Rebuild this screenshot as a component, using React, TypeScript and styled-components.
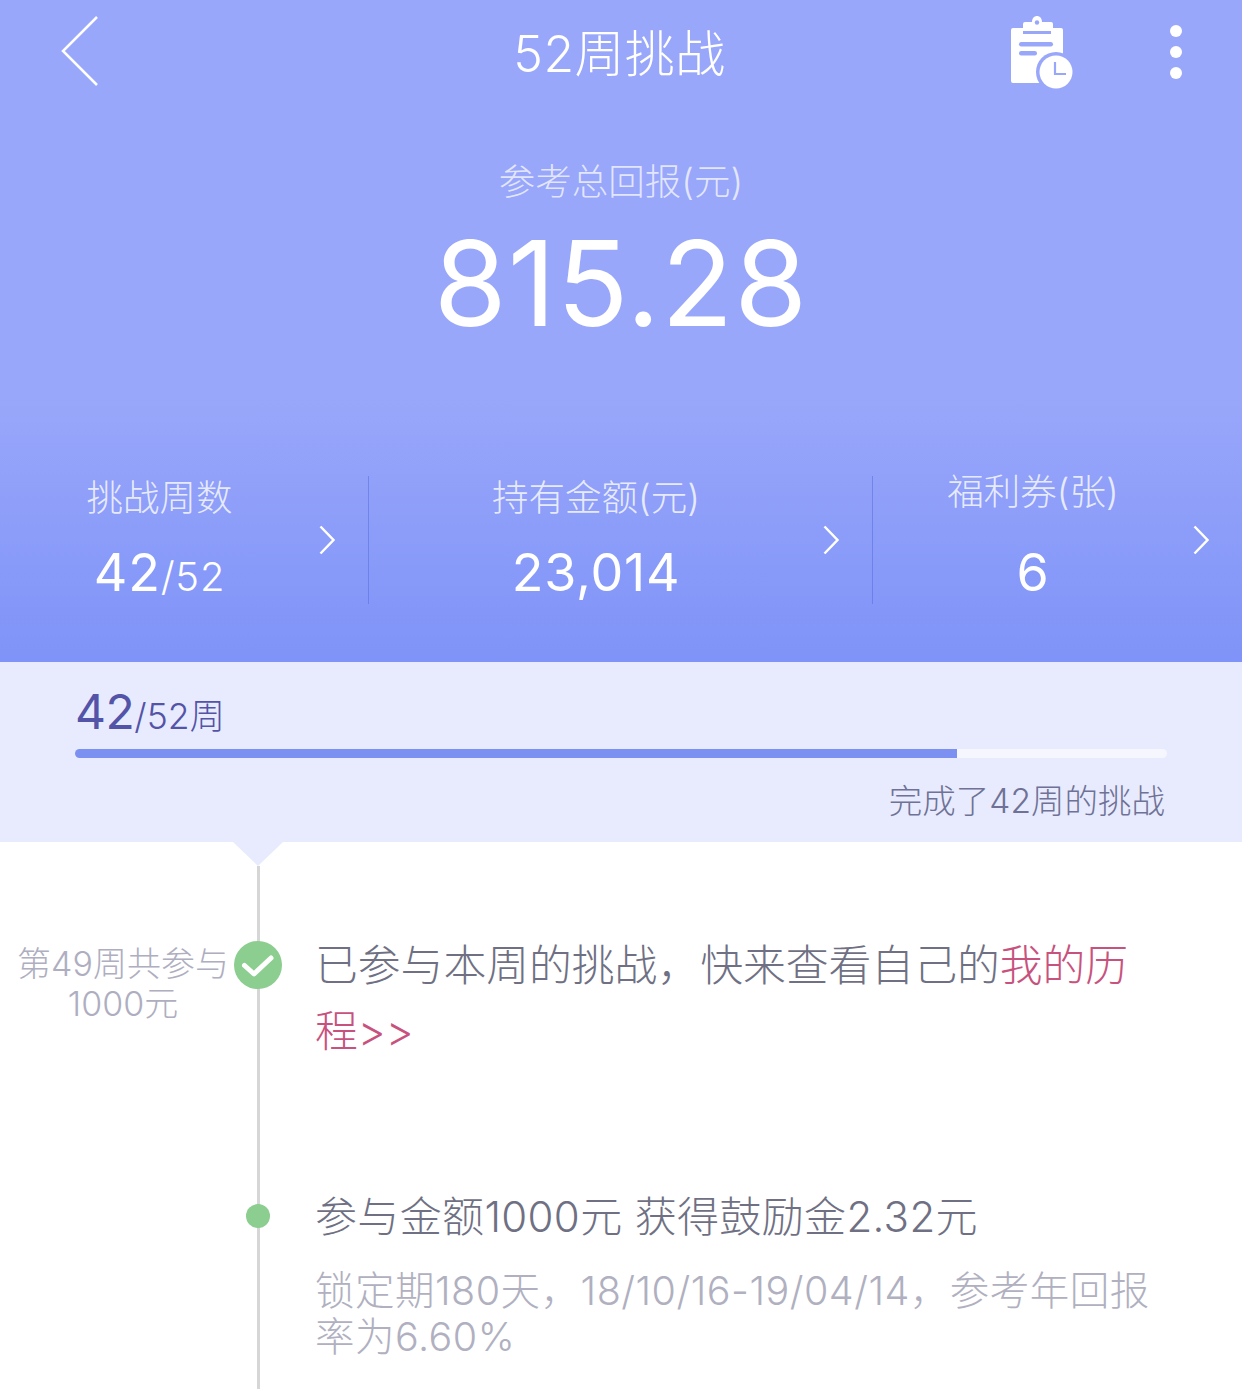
import styled, { createGlobalStyle } from 'styled-components'

const stats = [
  { label: '挑战周数', value: '42', suffix: '/52', raised: false },
  { label: '持有金额(元)', value: '23,014', suffix: '', raised: false },
  { label: '福利券(张)', value: '6', suffix: '', raised: true },
]

export default function App() {
  return (
    <>
      <GlobalStyle />
      <Page>
        <Header>
          <TopBar>
            <BackIcon viewBox="0 0 38 72">
              <path d="M36 2 L2 36 L36 70" />
            </BackIcon>
            <Title>52周挑战</Title>
            <TopActions>
              <ClipboardIcon />
              <MoreDots>
                <i />
                <i />
                <i />
              </MoreDots>
            </TopActions>
          </TopBar>
          <Hero>
            <HeroLabel>参考总回报(元)</HeroLabel>
            <HeroAmount>815.28</HeroAmount>
          </Hero>
          <StatsRow>
            {stats.map(stat => (
              <StatCell key={stat.label}>
                <StatBody>
                  <StatLabel $raised={stat.raised}>{stat.label}</StatLabel>
                  <StatValue>
                    {stat.value}
                    {stat.suffix && <StatSuffix>{stat.suffix}</StatSuffix>}
                  </StatValue>
                </StatBody>
                <Chevron viewBox="0 0 16 30">
                  <path d="M1.5 1.5 L14.5 15 L1.5 28.5" />
                </Chevron>
              </StatCell>
            ))}
          </StatsRow>
        </Header>

        <ProgressBand>
          <ProgressCount>
            <strong>42</strong>/52周
          </ProgressCount>
          <Track>
            <Fill style={{ width: `${(882 / 1092) * 100}%` }} />
          </Track>
          <ProgressNote>完成了42周的挑战</ProgressNote>
        </ProgressBand>

        <Timeline>
          <Pointer />
          <TimelineLine />
          <FirstEntry>
            <WeekNote>
              第49周共参与
              <br />
              1000元
            </WeekNote>
            <NodeSlot>
              <CheckNode viewBox="0 0 48 48">
                <circle cx="24" cy="24" r="24" />
                <path d="M10.5 24.5 L20 33 L37 17" />
              </CheckNode>
            </NodeSlot>
            <Message>
              已参与本周的挑战，快来查看自己的<Highlight>我的历程&gt;&gt;</Highlight>
            </Message>
          </FirstEntry>
          <SecondEntry>
            <span />
            <NodeSlot>
              <Dot />
            </NodeSlot>
            <div>
              <EntryTitle>参与金额1000元 获得鼓励金2.32元</EntryTitle>
              <EntryDetail>锁定期180天，18/10/16-19/04/14，参考年回报率为6.60%</EntryDetail>
            </div>
          </SecondEntry>
        </Timeline>
      </Page>
    </>
  )
}

function ClipboardIcon() {
  return (
    <ClipboardSvg viewBox="0 0 64 74">
      <path
        fill="#fff"
        d="M3 13 H13 V19 H41 V13 H51 Q53 13 53 15 V66 Q53 68 51 68 H3 Q1 68 1 66 V15 Q1 13 3 13 Z"
      />
      <path
        fill="#fff"
        d="M13 9 Q13 7 15 7 H22 C22 -1 32 -1 32 7 H41 Q43 7 43 9 V16 H13 Z"
      />
      <circle cx="27" cy="7.5" r="2.2" fill="#99a7fa" />
      <rect x="9" y="27" width="34" height="4.5" rx="2.2" fill="#99a7fa" />
      <rect x="9" y="36" width="18" height="4.5" rx="2.2" fill="#99a7fa" />
      <circle cx="46" cy="57" r="20" fill="#99a7fa" />
      <circle cx="46" cy="57" r="16.5" fill="#fff" />
      <path d="M45 47 V59 H56" fill="none" stroke="#99a7fa" strokeWidth="2.2" />
    </ClipboardSvg>
  )
}

const GlobalStyle = createGlobalStyle`
  html, body {
    margin: 0;
    padding: 0;
    background: #fff;
  }
  body {
    font-family: Inter, "Noto Sans CJK SC", sans-serif;
    font-weight: 300;
  }
`

const Page = styled.div`
  width: 1242px;
  height: 1389px;
  overflow: hidden;
`

const Header = styled.header`
  height: 662px;
  box-sizing: border-box;
  background: linear-gradient(180deg, #99a7fa 0%, #99a7fa 60%, #7f93f8 100%);
  color: #fff;
`

const TopBar = styled.div`
  display: grid;
  grid-template-columns: 1fr auto 1fr;
  align-items: center;
  height: 108px;
  padding: 0 61px;
`

const BackIcon = styled.svg`
  width: 38px;
  height: 72px;
  margin-top: -6px;
  fill: none;
  stroke: #fff;
  stroke-width: 2.5;
`

const Title = styled.h1`
  margin: 0 0 0 -3px;
  font-size: 50px;
  font-weight: 300;
  line-height: 1;
  letter-spacing: 0.4px;
`

const TopActions = styled.div`
  display: flex;
  justify-content: flex-end;
  align-items: center;
  gap: 96px;
  margin: -4px -1px 0 0;
`

const ClipboardSvg = styled.svg`
  width: 64px;
  height: 74px;
`

const MoreDots = styled.div`
  display: flex;
  flex-direction: column;
  gap: 9px;

  i {
    display: block;
    width: 12px;
    height: 12px;
    border-radius: 50%;
    background: #fff;
  }
`

const Hero = styled.div`
  display: flex;
  flex-direction: column;
  align-items: center;
  height: 368px;
  padding-top: 50px;
  box-sizing: border-box;
`

const HeroLabel = styled.div`
  font-size: 36.5px;
  line-height: 48px;
  color: rgba(255, 255, 255, 0.72);
`

const HeroAmount = styled.div`
  margin-top: 7px;
  font-size: 118px;
  font-weight: 400;
  line-height: 140px;
  letter-spacing: 1px;
`

const StatsRow = styled.div`
  display: flex;
  height: 128px;
`

const StatCell = styled.div`
  flex: 0 0 auto;
  display: flex;
  align-items: center;
  box-sizing: border-box;
  width: 369px;
  border-right: 1px solid rgba(85, 110, 225, 0.55);

  &:nth-child(2) {
    width: 504px;
  }

  &:last-child {
    width: 369px;
    border-right: 0;
  }
`

const StatBody = styled.div`
  flex: 1;
  display: flex;
  flex-direction: column;
  align-items: center;
  height: 100%;
`

const StatLabel = styled.div<{ $raised: boolean }>`
  height: 44px;
  margin-top: ${props => (props.$raised ? '-6px' : '0')};
  margin-bottom: ${props => (props.$raised ? '6px' : '0')};
  font-size: 36.5px;
  line-height: 44px;
  color: rgba(255, 255, 255, 0.8);
`

const StatValue = styled.div`
  margin-top: 21px;
  font-size: 52px;
  font-weight: 400;
  line-height: 64px;
  letter-spacing: 0.8px;
`

const StatSuffix = styled.span`
  font-size: 40px;
  font-weight: 300;
`

const Chevron = styled.svg`
  flex: 0 0 auto;
  width: 16px;
  height: 30px;
  margin-right: 33px;
  fill: none;
  stroke: #fff;
  stroke-width: 2.5;
`

const ProgressBand = styled.section`
  height: 180px;
  box-sizing: border-box;
  padding: 22px 75px 0;
  background: #e8ebfd;
`

const ProgressCount = styled.div`
  height: 65px;
  font-size: 35.5px;
  line-height: 56px;
  color: #5353a8;

  strong {
    font-size: 48px;
    font-weight: 400;
    letter-spacing: -0.5px;
  }
`

const Track = styled.div`
  height: 9px;
  border-radius: 5px;
  background: #f6f7fe;
  overflow: hidden;
`

const Fill = styled.div`
  height: 100%;
  background: #7b90f0;
`

const ProgressNote = styled.div`
  margin-top: 22px;
  padding-right: 2px;
  text-align: right;
  font-size: 33.5px;
  line-height: 42px;
  color: #6f7296;
`

const Timeline = styled.section`
  position: relative;
  height: 547px;
`

const Pointer = styled.div`
  position: absolute;
  top: 0;
  left: 233px;
  width: 0;
  height: 0;
  border-left: 25px solid transparent;
  border-right: 25px solid transparent;
  border-top: 24px solid #e8ebfd;
`

const TimelineLine = styled.div`
  position: absolute;
  top: 24px;
  bottom: 0;
  left: 257px;
  width: 3px;
  background: #d6d6d6;
`

const EntryGrid = styled.div`
  position: relative;
  display: grid;
  grid-template-columns: 234px 48px 1fr;
  column-gap: 0;
`

const FirstEntry = styled(EntryGrid)`
  padding-top: 99px;
  height: 362px;
  box-sizing: border-box;
`

const SecondEntry = styled(EntryGrid)``

const WeekNote = styled.div`
  padding: 3px 0 0 12px;
  text-align: center;
  font-size: 34px;
  line-height: 40px;
  white-space: nowrap;
  color: #aeaec0;
`

const NodeSlot = styled.div`
  display: flex;
  justify-content: center;
  align-items: flex-start;
  height: 48px;
`

const CheckNode = styled.svg`
  width: 48px;
  height: 48px;

  circle {
    fill: #8ccd90;
  }

  path {
    fill: none;
    stroke: #fff;
    stroke-width: 5;
    stroke-linecap: round;
    stroke-linejoin: round;
  }
`

const Dot = styled.div`
  width: 24px;
  height: 24px;
  border-radius: 50%;
  background: #8ccd90;
`

const Message = styled.p`
  margin: -8px 0 0 33px;
  width: 830px;
  font-size: 42.8px;
  line-height: 66px;
  color: #6f7083;
`

const Highlight = styled.span`
  color: #c8527e;
`

const EntryTitle = styled.div`
  margin: -12px 0 0 33px;
  font-size: 42px;
  line-height: 50px;
  letter-spacing: 0.35px;
  color: #6f7083;
`

const EntryDetail = styled.div`
  margin: 26px 0 0 33px;
  width: 850px;
  font-size: 39.5px;
  line-height: 46px;
  letter-spacing: 0.5px;
  color: #b0b0c0;
`
